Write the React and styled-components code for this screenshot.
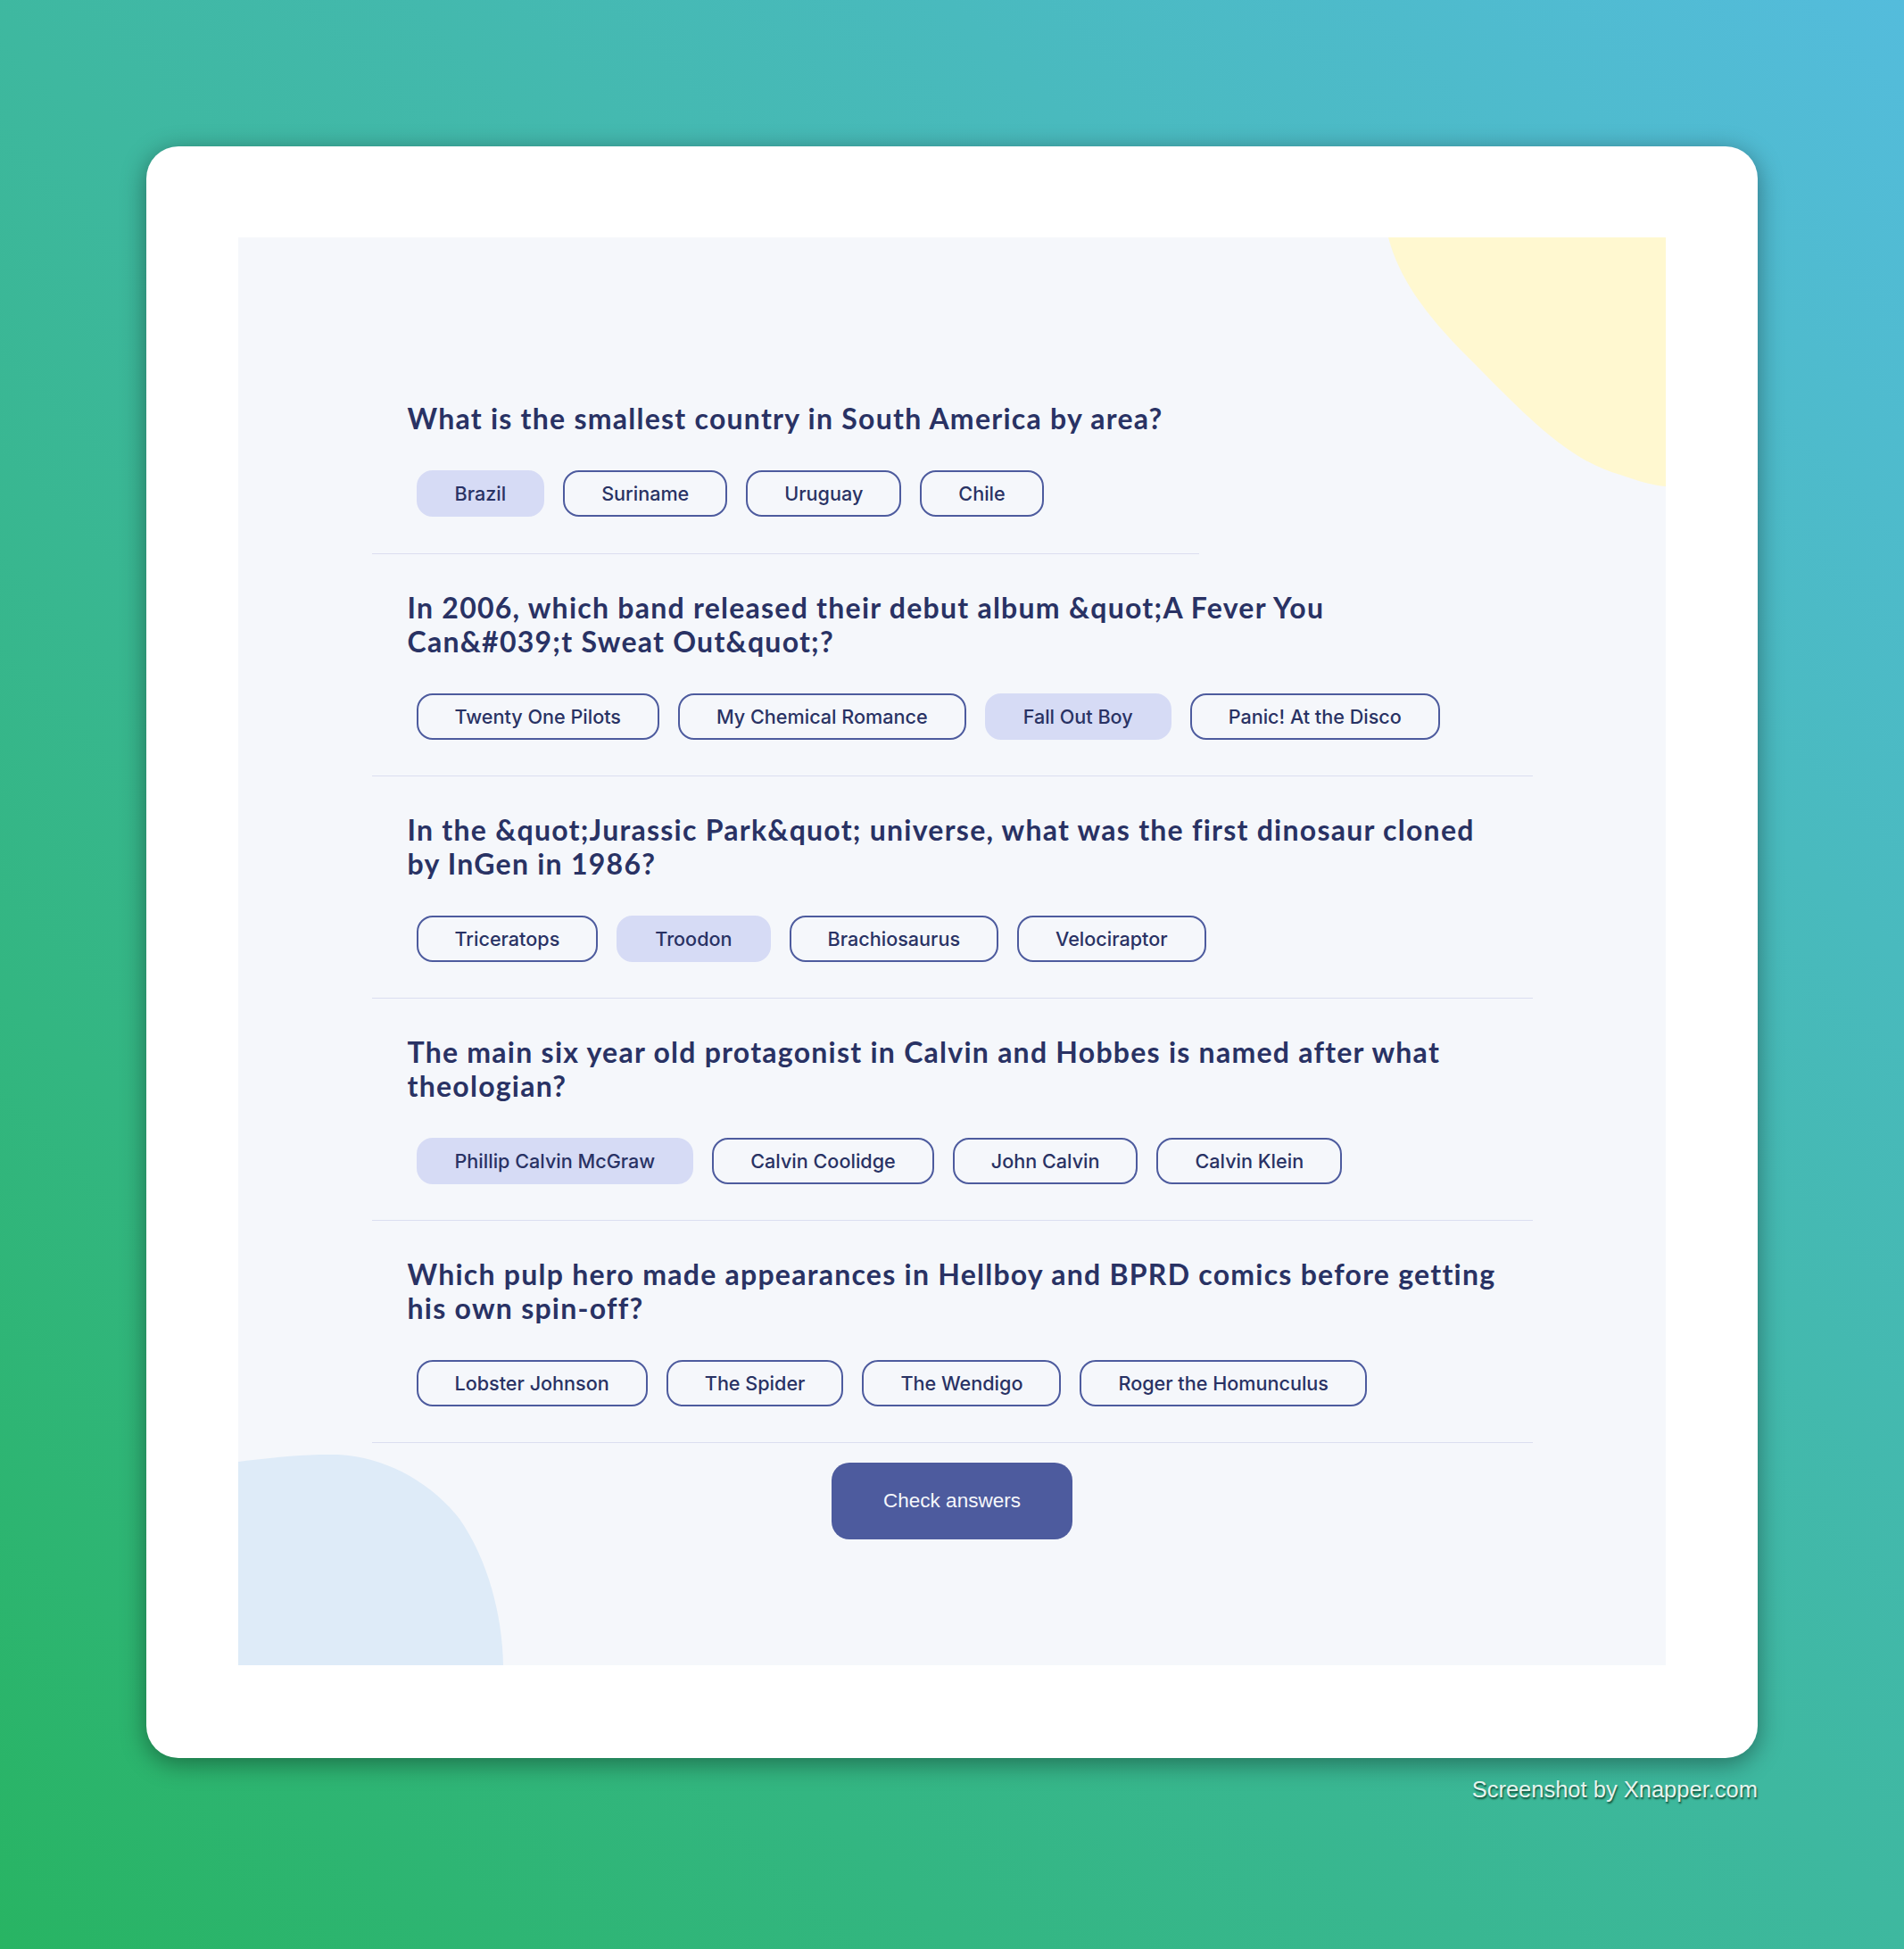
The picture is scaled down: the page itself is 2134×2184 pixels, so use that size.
import React, { useState, Fragment } from "react";
import styled, { createGlobalStyle } from "styled-components";

const GlobalStyle = createGlobalStyle`
  body {
    margin: 0;
    font-family: "Inter", "Liberation Sans", sans-serif;
  }
`;

const Page = styled.div`
  min-height: 2184px;
  background: linear-gradient(45deg, #28b463 0%, #54bcdc 100%);
  display: flex;
  flex-direction: column;
  align-items: center;
  padding-top: 164px;
  box-sizing: border-box;
`;

const Card = styled.div`
  width: 1806px;
  box-sizing: border-box;
  padding: 102px 103px 104px;
  background: #ffffff;
  border-radius: 36px;
  box-shadow: 0 6px 28px rgba(0, 0, 0, 0.4);
`;

const Panel = styled.div`
  position: relative;
  width: 1600px;
  height: 1600px;
  background: #f5f7fb;
  overflow: hidden;
  display: flex;
  flex-direction: column;
  justify-content: center;
  align-items: center;
`;

const Blob = styled.svg`
  position: absolute;
  ${(p) => (p.$corner === "top" ? "top: 0; right: 0;" : "bottom: 0; left: 0;")}
`;

const Quiz = styled.div`
  position: relative;
  width: 1301px;
  display: flex;
  flex-direction: column;
  align-items: flex-start;
`;

const QuestionBlock = styled.div`
  padding: ${(p) => (p.$full ? "41px 40px 40px" : "43px 40px 41px")};
  border-bottom: 1px solid #dbdef0;
  box-sizing: border-box;
  align-self: ${(p) => (p.$full ? "stretch" : "flex-start")};
`;

const Question = styled.h2`
  margin: 0;
  font-family: "Lato", "Liberation Sans", sans-serif;
  font-weight: 700;
  font-size: 32px;
  line-height: 37.5px;
  letter-spacing: 1.25px;
  white-space: nowrap;
  color: #293264;
`;

const Answers = styled.div`
  display: flex;
  gap: 21px;
  margin: 40px 0 0 10px;
`;

const Answer = styled.button`
  height: 52px;
  padding: 0 41px;
  border-radius: 18px;
  border: 2px solid ${(p) => (p.$selected ? "#d6dbf5" : "#4d5b9e")};
  background: ${(p) => (p.$selected ? "#d6dbf5" : "transparent")};
  color: #293264;
  font-family: "Inter", "Liberation Sans", sans-serif;
  font-weight: 500;
  font-size: 21.6px;
  cursor: pointer;
  display: inline-flex;
  align-items: center;
`;

const CheckButton = styled.button`
  position: relative;
  margin-top: 22px;
  width: 270px;
  height: 86px;
  border: none;
  border-radius: 20px;
  background: #4d5b9e;
  color: #f5f7fb;
  font-family: "Liberation Sans", Arial, sans-serif;
  font-size: 22.5px;
  cursor: pointer;
`;

const Watermark = styled.div`
  width: 1806px;
  margin-top: 20px;
  text-align: right;
  font-family: "Liberation Sans", Arial, sans-serif;
  font-size: 25.5px;
  line-height: 30px;
  color: #e6f4ee;
  text-shadow: 1px 2px 2px rgba(0, 40, 20, 0.75);
`;

const questions = [
  {
    q: ["What is the smallest country in South America by area?"],
    answers: ["Brazil", "Suriname", "Uruguay", "Chile"],
    picked: 0,
  },
  {
    q: [
      "In 2006, which band released their debut album &quot;A Fever You",
      "Can&#039;t Sweat Out&quot;?",
    ],
    answers: ["Twenty One Pilots", "My Chemical Romance", "Fall Out Boy", "Panic! At the Disco"],
    picked: 2,
  },
  {
    q: [
      "In the &quot;Jurassic Park&quot; universe, what was the first dinosaur cloned",
      "by InGen in 1986?",
    ],
    answers: ["Triceratops", "Troodon", "Brachiosaurus", "Velociraptor"],
    picked: 1,
  },
  {
    q: [
      "The main six year old protagonist in Calvin and Hobbes is named after what",
      "theologian?",
    ],
    answers: ["Phillip Calvin McGraw", "Calvin Coolidge", "John Calvin", "Calvin Klein"],
    picked: 0,
  },
  {
    q: [
      "Which pulp hero made appearances in Hellboy and BPRD comics before getting",
      "his own spin-off?",
    ],
    answers: ["Lobster Johnson", "The Spider", "The Wendigo", "Roger the Homunculus"],
    picked: -1,
  },
];

export default function App() {
  const [picks, setPicks] = useState(questions.map((q) => q.picked));

  const pick = (qi, ai) => {
    setPicks((prev) => prev.map((p, i) => (i === qi ? ai : p)));
  };

  return (
    <Page>
      <GlobalStyle />
      <Card>
        <Panel>
          <Blob $corner="top" width="311" height="280" viewBox="0 0 311 280">
            <path
              d="M0 0 C12 45 40 85 90 135 C150 195 200 250 260 266 C280 273 296 278 311 279 L311 0 Z"
              fill="#fff8d0"
            />
          </Blob>
          <Blob $corner="bottom" width="297" height="236" viewBox="0 0 297 236">
            <path
              d="M0 8 C40 3 80 -1 112 0 C165 3 215 30 248 72 C280 118 296 180 297 236 L0 236 Z"
              fill="#deebf8"
            />
          </Blob>
          <Quiz>
            {questions.map((item, qi) => (
              <QuestionBlock key={qi} $full={qi > 0}>
                <Question>
                  {item.q.map((line, li) => (
                    <Fragment key={li}>
                      {li > 0 && <br />}
                      {line}
                    </Fragment>
                  ))}
                </Question>
                <Answers>
                  {item.answers.map((a, ai) => (
                    <Answer key={a} $selected={picks[qi] === ai} onClick={() => pick(qi, ai)}>
                      {a}
                    </Answer>
                  ))}
                </Answers>
              </QuestionBlock>
            ))}
          </Quiz>
          <CheckButton>Check answers</CheckButton>
        </Panel>
      </Card>
      <Watermark>Screenshot by Xnapper.com</Watermark>
    </Page>
  );
}
